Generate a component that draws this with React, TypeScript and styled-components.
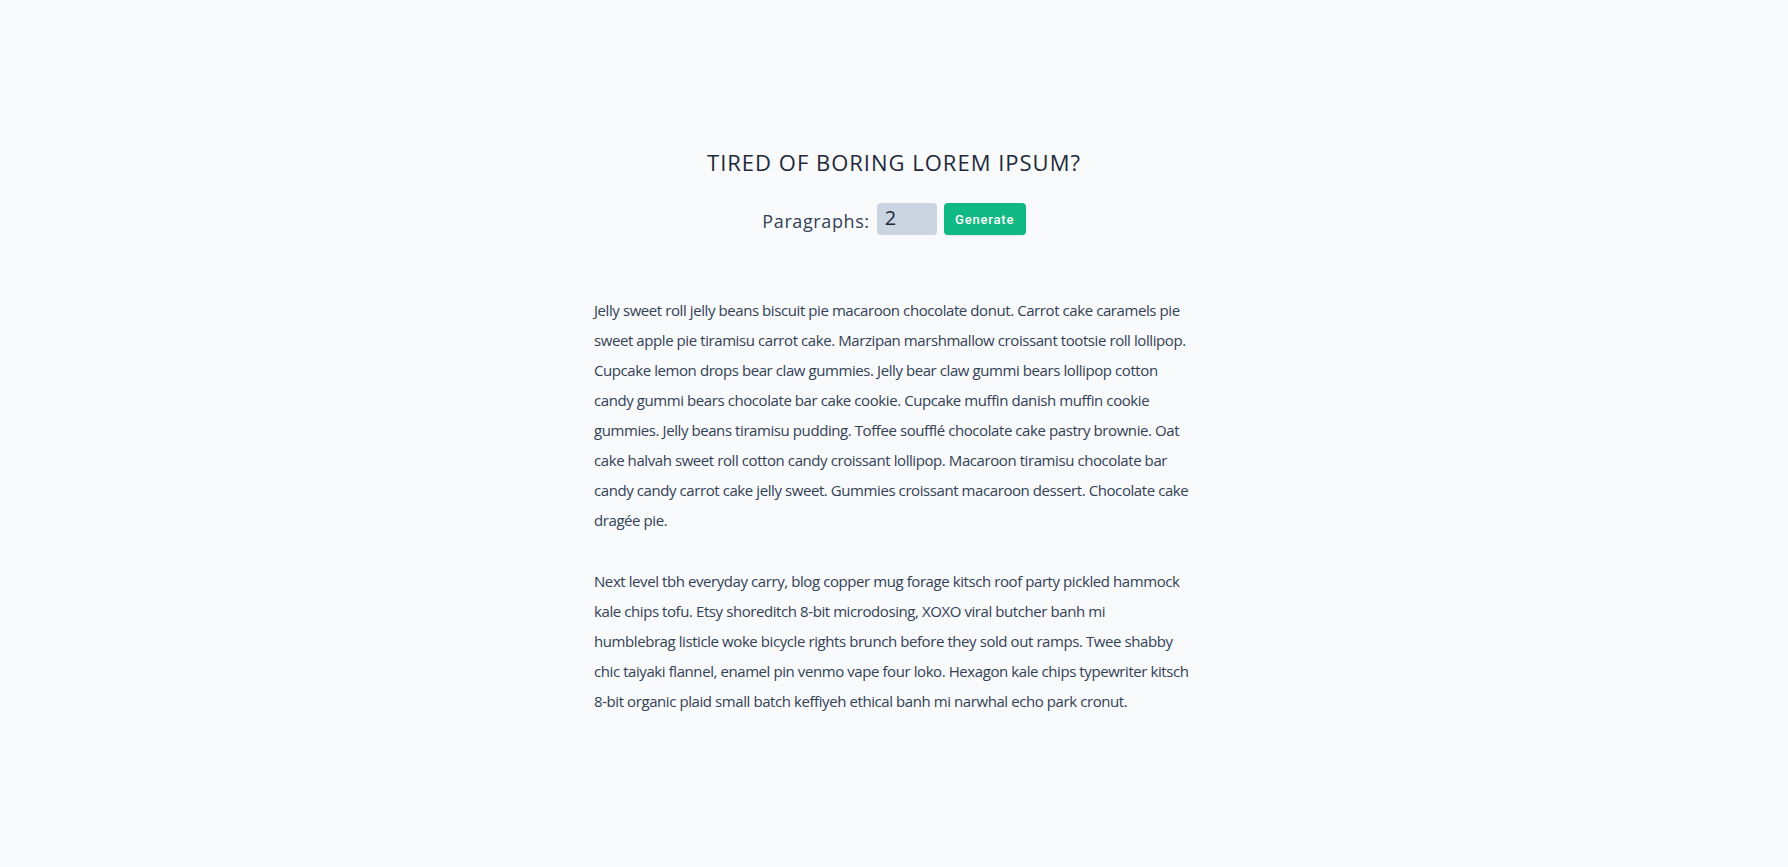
import React, { useState } from "react";
import styled, { createGlobalStyle } from "styled-components";

const GlobalStyle = createGlobalStyle`
  *, *::before, *::after { box-sizing: border-box; }
  html, body { margin: 0; padding: 0; }
  body {
    background: #f8fafc;
    font-family: "Open Sans", "Noto Sans", Arial, sans-serif;
    color: #334155;
  }
`;

const Section = styled.section`
  width: 600px;
  margin: 0 auto;
  padding-top: 147px;
`;

const Title = styled.h3`
  margin: 0;
  text-align: center;
  text-transform: uppercase;
  font-size: 22px;
  font-weight: 400;
  letter-spacing: 1px;
  line-height: 30px;
  color: #1e293b;
`;

const Form = styled.form`
  margin-top: 26px;
  display: flex;
  justify-content: center;
  align-items: center;
  gap: 7px;
`;

const Label = styled.label`
  font-size: 18px;
  letter-spacing: 0.6px;
  color: #334155;
  padding-top: 4px;
`;

const NumberInput = styled.input`
  width: 60px;
  height: 32px;
  border: none;
  border-radius: 4px;
  background: #cbd5e1;
  color: #1e293b;
  font-family: inherit;
  font-size: 20px;
  padding: 0 8px 3px;
  outline: none;
  line-height: 32px;
  &::-webkit-inner-spin-button,
  &::-webkit-outer-spin-button { -webkit-appearance: none; margin: 0; }
  -moz-appearance: textfield;
`;

const Button = styled.button`
  width: 82px;
  height: 32px;
  border: none;
  border-radius: 4px;
  background: #10b981;
  color: #ffffff;
  font-family: Roboto, "Liberation Sans", sans-serif;
  font-size: 13px;
  font-weight: 500;
  letter-spacing: 0.8px;
  cursor: pointer;
  box-shadow: 0 1px 2px rgba(0, 0, 0, 0.08);
`;

const Article = styled.article`
  margin-top: 60px;
`;

const Para = styled.p`
  margin: 0 0 31px;
  font-size: 15px;
  letter-spacing: -0.42px;
  line-height: 30px;
  white-space: pre-line;
  color: #334155;
`;

const paragraphs = [
  `Jelly sweet roll jelly beans biscuit pie macaroon chocolate donut. Carrot cake caramels pie
sweet apple pie tiramisu carrot cake. Marzipan marshmallow croissant tootsie roll lollipop.
Cupcake lemon drops bear claw gummies. Jelly bear claw gummi bears lollipop cotton
candy gummi bears chocolate bar cake cookie. Cupcake muffin danish muffin cookie
gummies. Jelly beans tiramisu pudding. Toffee soufflé chocolate cake pastry brownie. Oat
cake halvah sweet roll cotton candy croissant lollipop. Macaroon tiramisu chocolate bar
candy candy carrot cake jelly sweet. Gummies croissant macaroon dessert. Chocolate cake
dragée pie.`,
  `Next level tbh everyday carry, blog copper mug forage kitsch roof party pickled hammock
kale chips tofu. Etsy shoreditch 8-bit microdosing, XOXO viral butcher banh mi
humblebrag listicle woke bicycle rights brunch before they sold out ramps. Twee shabby
chic taiyaki flannel, enamel pin venmo vape four loko. Hexagon kale chips typewriter kitsch
8-bit organic plaid small batch keffiyeh ethical banh mi narwhal echo park cronut.`,
];

export default function App() {
  const [count, setCount] = useState("2");
  return (
    <>
      <GlobalStyle />
      <Section>
        <Title>Tired of boring lorem ipsum?</Title>
        <Form onSubmit={(e) => e.preventDefault()}>
          <Label htmlFor="amount">Paragraphs:</Label>
          <NumberInput
            id="amount"
            type="number"
            value={count}
            onChange={(e) => setCount(e.target.value)}
          />
          <Button type="submit">Generate</Button>
        </Form>
        <Article>
          {paragraphs.map((p, i) => (
            <Para key={i}>{p}</Para>
          ))}
        </Article>
      </Section>
    </>
  );
}
